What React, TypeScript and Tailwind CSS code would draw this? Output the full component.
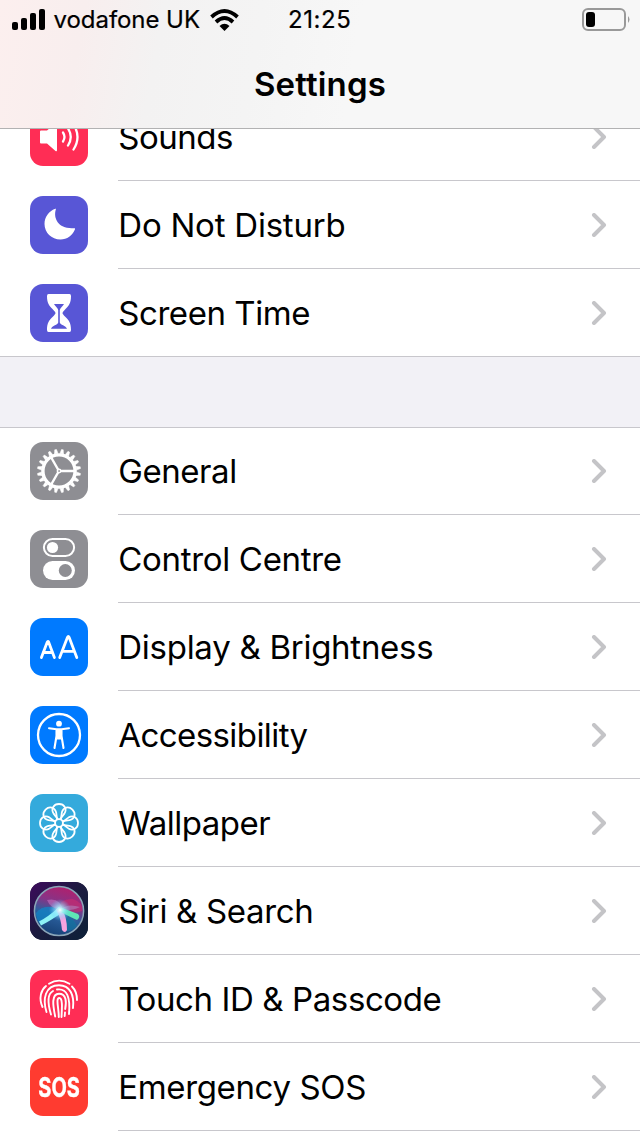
import type { ReactNode } from 'react';

const stroke = { fill: 'none', stroke: '#fff', strokeLinecap: 'round' as const, strokeLinejoin: 'round' as const };

function Icon({ bg, children }: { bg: string; children: ReactNode }) {
  return (
    <svg viewBox="0 0 58 58" className={`size-[58px] shrink-0 rounded-[13px] ${bg}`}>
      {children}
    </svg>
  );
}

const Sounds = () => (
  <Icon bg="bg-[#ff2d55]">
    <path d="M11 22.5H17L25.5 15Q27 14 27 16V42Q27 44 25.5 43L17 35.5H11Q10 35.5 10 34.5V23.5Q10 22.5 11 22.5Z" fill="#fff" />
    <g {...stroke} strokeWidth="2.3">
      <path d="M33 24.5Q36 29 33 33.5" />
      <path d="M38 20.5Q43.5 29 38 37.5" />
      <path d="M43.5 16.5Q51.5 29 43.5 41.5" />
    </g>
  </Icon>
);

const Moon = () => (
  <Icon bg="bg-[#5856d6]">
    <path d="M25.2 12.8C26 12.5 26 13 25.8 13.6C23 23 29 33.5 44.2 32.2C45 32.2 45.3 32.5 45 33.2C42.5 39.5 37 43.5 30.5 43.5C21.5 43.5 14.5 36.5 14.5 28C14.5 21 18.8 15.2 25.2 12.8Z" fill="#fff" />
  </Icon>
);

const Hourglass = () => (
  <Icon bg="bg-[#5856d6]">
    <path d="M18.5 10H39.5Q41 10 41 12C41 19 39 21.5 35.5 25Q32.5 28 32.5 29T35.5 33C39 36.5 41 39 41 46Q41 48 39.5 48H18.5Q17 48 17 46C17 39 19 36.5 22.5 33Q25.5 30 25.5 29T22.5 25C19 21.5 17 19 17 12Q17 10 18.5 10Z" fill="#fff" />
    <path d="M24 20H34C33 22 30.2 24 29.8 26V38.5C30 41 36 41.5 37 44.8H21C22 41.5 28 41 28.2 38.5V26C27.8 24 25 22 24 20Z" fill="#5856d6" />
  </Icon>
);

const Gear = () => (
  <Icon bg="bg-[#8e8e93]">
    {Array.from({ length: 20 }, (_, i) => (
      <path key={i} d="M27.2 11.5L28.1 7.4H29.9L30.8 11.5Z" fill="#fff" stroke="#fff" strokeWidth=".5" transform={`rotate(${i * 18 + 9} 29 29)`} />
    ))}
    <circle cx="29" cy="29" r="16.1" {...stroke} strokeWidth="3.4" />
    <path d="M31 29H45M28 27.3L21 15.2M28 30.7L21 42.8" {...stroke} strokeWidth="2.3" />
    <circle cx="29" cy="29" r="1.7" {...stroke} strokeWidth="1.5" />
  </Icon>
);

const Toggles = () => (
  <Icon bg="bg-[#8e8e93]">
    <rect x="13.9" y="8.9" width="30.2" height="17.2" rx="8.6" {...stroke} strokeWidth="2" />
    <circle cx="22.5" cy="17.5" r="5.6" fill="#fff" />
    <rect x="13" y="31" width="32" height="19" rx="9.5" fill="#fff" />
    <circle cx="35.3" cy="40.5" r="6.5" fill="#8e8e93" />
  </Icon>
);

const Letters = () => (
  <Icon bg="bg-[#007aff]">
    <g {...stroke} strokeWidth="2.8">
      <path d="M11.4 39.6L17.3 24Q17.9 22.6 18.6 24L24.4 39.6M13.2 34.5H22.6" />
      <path d="M29.7 39.6L37.5 19.3Q38.3 17.5 39.1 19.3L46.8 39.6M32.3 33.3H44.2" />
    </g>
  </Icon>
);

const Access = () => (
  <Icon bg="bg-[#007aff]">
    <circle cx="29" cy="29" r="21" {...stroke} strokeWidth="2.3" />
    <circle cx="29" cy="17.7" r="2.9" fill="#fff" />
    <path d="M19 22.2L26.5 23.2H31.5L39 22.2M26.5 24V30L24.5 42M31.5 24V30L33.5 42" {...stroke} strokeWidth="2.1" />
    <path d="M26 23H32V30L31 33.5H27L26 30Z" fill="#fff" />
  </Icon>
);

const Flower = () => (
  <Icon bg="bg-[#34aadc]">
    {Array.from({ length: 8 }, (_, i) => (
      <path key={i} d="M27.7 25L23.6 19.6C20.6 14.6 23.8 10 29 10S37.4 14.6 34.4 19.6L30.3 25" {...stroke} strokeWidth="1.8" transform={`rotate(${i * 45} 29 29)`} />
    ))}
    <circle cx="29" cy="29" r="3.9" fill="#34aadc" stroke="#fff" strokeWidth="1.8" />
  </Icon>
);

const Siri = () => (
  <Icon bg="bg-[#181b38]">
    <defs>
      <linearGradient id="siriBack" x1="0" y1="0" x2="1" y2="1">
        <stop offset="0" stopColor="#3d0a5c" />
        <stop offset=".5" stopColor="#1b1b3f" />
        <stop offset="1" stopColor="#0c2138" />
      </linearGradient>
      <linearGradient id="siriOrb" x1=".65" y1="0" x2=".35" y2="1">
        <stop offset="0" stopColor="#b31f6c" />
        <stop offset=".35" stopColor="#863487" />
        <stop offset=".6" stopColor="#2b609e" />
        <stop offset="1" stopColor="#153f74" />
      </linearGradient>
      <radialGradient id="siriGlow">
        <stop offset="0" stopColor="#fff" />
        <stop offset=".35" stopColor="#a8efff" stopOpacity=".75" />
        <stop offset="1" stopColor="#57c8ff" stopOpacity="0" />
      </radialGradient>
      <filter id="siriSoft" x="-20%" y="-20%" width="140%" height="140%">
        <feGaussianBlur stdDeviation=".7" />
      </filter>
    </defs>
    <rect width="58" height="58" fill="url(#siriBack)" />
    <circle cx="29" cy="29" r="24.6" fill="url(#siriOrb)" stroke="#8aa5b8" strokeWidth="1.5" />
    <g filter="url(#siriSoft)">
      <path d="M28 27Q30 16 43 17Q54 21 52 29Q44 33 30 28Z" fill="#d92a6c" opacity=".5" />
      <path d="M6 31Q14 21 28 27L11 43Q6 38 6 31Z" fill="#1484c7" opacity=".75" />
      <path d="M17 18Q30 15 33 28Q20 27 17 18Z" fill="#d080cc" opacity=".5" />
      <path d="M30 28Q42 33 47 44Q42 50 35 49Z" fill="#1573a0" opacity=".7" />
      <path d="M31 27Q38 21 50 25Q42 29 31 28Z" fill="#b29bd0" opacity=".45" />
      <path d="M29 25Q18 35 9 39.500L11 43.5Q20 39 33 30Z" fill="#8df2f6" />
      <path d="M26 27Q31 36 32 48Q35 52 37 48Q37 35 32 27Z" fill="#f7a3df" />
      <path d="M27 28Q40 35 47 38Q51 35 48 32Q38 28 29 25Z" fill="#5fe6b5" />
      <circle cx="30" cy="28" r="11" fill="url(#siriGlow)" />
    </g>
  </Icon>
);

const Finger = () => (
  <Icon bg="bg-[#ff2d55]">
    <g {...stroke} strokeWidth="1.9">
      <path d="M19 13.8Q29 7.5 39.5 13.8" />
      <path d="M12.5 37C8.5 28 11 20 16 16M42 16.5C45.5 20 47 24 47 30" />
      <path d="M16.5 42C12.5 29 15 15.2 29 15.2C40 15.2 44.5 25 43 38" />
      <path d="M21 44.5C17.5 33 17.5 24 23 21M27 19.500C37 18 40.5 27 39 44" />
      <path d="M25.2 46.5C23 36 21 23.7 29 23.7C36.5 23.7 36.5 32 35.2 39M35 42.5L34.7 46" />
      <path d="M28.8 47C28.800 38 25.500 28 29.3 28C32.800 28 32 38 31.500 47" />
    </g>
  </Icon>
);

const Sos = () => (
  <div className="flex size-[58px] shrink-0 items-center justify-center rounded-[13px] bg-[#ff3b30]">
    <span className="scale-x-[0.74] text-[27px] font-bold leading-none text-white [-webkit-text-stroke:0.4px_#fff]">SOS</span>
  </div>
);

function Row({ icon, label, spacing, last }: { icon: ReactNode; label: string; spacing: string; last?: boolean }) {
  return (
    <div className="flex h-[88px] shrink-0 items-center pl-[30px]">
      {icon}
      <div className={`ml-[30px] flex h-[88px] flex-1 items-center justify-between pl-[0.3px] pr-[33px] ${last ? '' : 'border-b border-[#c8c7cc]'}`}>
        <span className={`whitespace-nowrap text-[33px] leading-[40px] ${spacing}`}>{label}</span>
        <svg width="17" height="24" viewBox="0 0 17 24" className="shrink-0">
          <path d="M4 2L14 12L4 22" fill="none" stroke="#c4c4c7" strokeWidth="4" strokeLinecap="round" strokeLinejoin="round" />
        </svg>
      </div>
    </div>
  );
}

export default function App() {
  return (
    <div className="flex h-[1136px] w-[640px] flex-col overflow-hidden bg-white font-['Inter',sans-serif] text-black">
      <header className="flex h-[129px] shrink-0 flex-col border-b border-[#b2b2b3] bg-[linear-gradient(100deg,#fcefee_0%,#f8eeee_13%,#f3f2f2_25%,#f4f4f4_40%,#f7f7f7_55%)]">
        <div className="flex h-10 items-center pl-3 pr-[10px]">
          <svg width="34" height="22" viewBox="0 0 34 22">
            <rect x="0" y="13" width="6" height="8" rx="2" />
            <rect x="9" y="9" width="6" height="12" rx="2" />
            <rect x="18" y="4" width="6" height="17" rx="2" />
            <rect x="27" y="0" width="6" height="21" rx="2" />
          </svg>
          <span className="ml-[7.5px] w-[156.5px] whitespace-nowrap text-[24px] leading-[30px] tracking-[-0.05px] [-webkit-text-stroke:0.2px_#000]">vodafone UK</span>
          <svg width="30" height="22" viewBox="0 0 30 22" fill="none" stroke="#000" strokeWidth="3.8">
            <path d="M1.5 8Q14.5-4 27.5 8" />
            <path d="M6 13Q14.5 5 23 13" />
            <path d="M9.5 17Q14.5 12.5 19.5 17L14.5 22Z" fill="#000" stroke="none" />
          </svg>
          <span className="ml-[48px] text-[24px] leading-[30px] tracking-[0.6px] [-webkit-text-stroke:0.2px_#000]">21:25</span>
          <svg className="ml-auto" width="48" height="24" viewBox="0 0 48 24">
            <rect x="1" y="1" width="42" height="21" rx="5" fill="none" stroke="#999" strokeWidth="2" />
            <rect x="4" y="4" width="9" height="15" rx="3" />
            <path d="M46 8Q49 11.5 46 15Z" fill="#999" />
          </svg>
        </div>
        <h1 className="mt-[24px] text-center text-[33px] font-semibold leading-[40px] tracking-[0.15px]">Settings</h1>
      </header>
      <main className="flex flex-col">
        <section className="h-[228px] shrink-0 overflow-hidden border-b border-[#c8c7cc]">
          <div className="-mt-9 flex flex-col">
            <Row icon={<Sounds />} label="Sounds" spacing="tracking-[-0.5px]" />
            <Row icon={<Moon />} label="Do Not Disturb" spacing="tracking-[-0.23px]" />
            <Row icon={<Hourglass />} label="Screen Time" spacing="tracking-[-0.45px]" last />
          </div>
        </section>
        <div className="h-[71px] shrink-0 border-b border-[#c8c7cc] bg-[#f2f1f6]" />
        <section className="-mt-px">
          <Row icon={<Gear />} label="General" spacing="tracking-[-0.45px]" />
          <Row icon={<Toggles />} label="Control Centre" spacing="tracking-[-0.32px]" />
          <Row icon={<Letters />} label="Display & Brightness" spacing="tracking-[-0.27px]" />
          <Row icon={<Access />} label="Accessibility" spacing="tracking-[-0.58px]" />
          <Row icon={<Flower />} label="Wallpaper" spacing="tracking-[-0.5px]" />
          <Row icon={<Siri />} label="Siri & Search" spacing="tracking-[-0.33px]" />
          <Row icon={<Finger />} label="Touch ID & Passcode" spacing="tracking-[-0.4px]" />
          <Row icon={<Sos />} label="Emergency SOS" spacing="tracking-[-0.37px]" />
        </section>
      </main>
    </div>
  );
}
